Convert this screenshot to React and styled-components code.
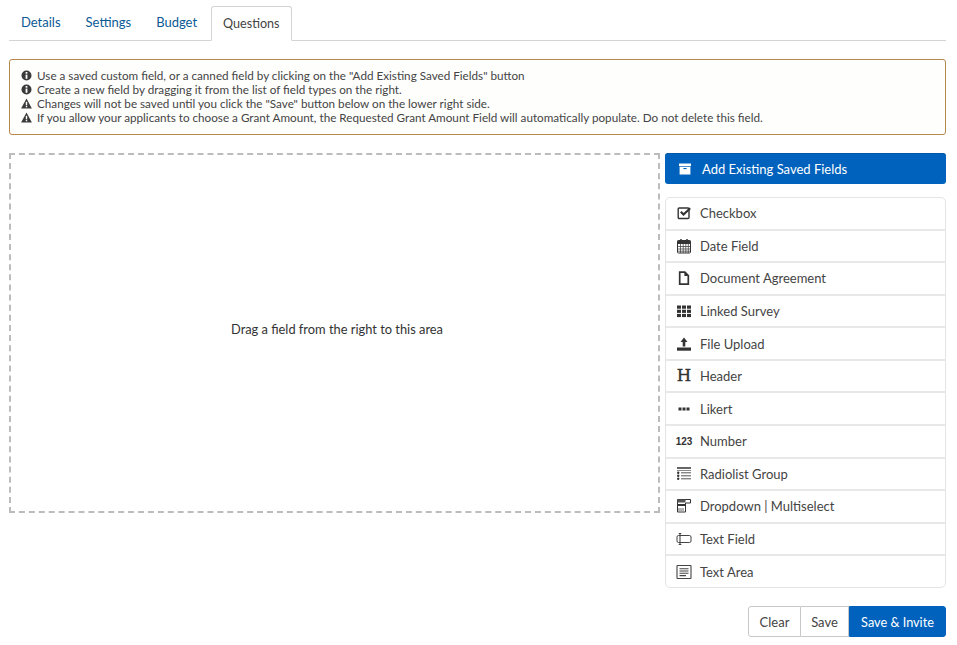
import React from "react";
import styled, { createGlobalStyle } from "styled-components";

const Global = createGlobalStyle`
  html, body { margin: 0; padding: 0; background: #fff; }
  body { font-family: "Lato", "Open Sans", sans-serif; font-size: 13px; color: #333; }
  * { box-sizing: border-box; }
`;

const Page = styled.div`
  width: 957px;
  height: 645px;
  padding: 6px 11px 0 9px;
  overflow: hidden;
`;
const TabBar = styled.div`
  display: flex;
  height: 35px;
  border-bottom: 1px solid #d4d4d4;
`;
const Tab = styled.div`
  height: ${p => (p.$active ? "35px" : "34px")};
  padding: ${p => (p.$active ? "0 11px 1px" : "0 11px 2px")};
  margin: ${p => (p.$active ? "0 0 0 1px" : "0 1px 0 0")};
  display: flex;
  align-items: center;
  font-size: ${p => (p.$active ? "12.6px" : "13px")};
  color: ${p => (p.$active ? "#444" : "#0b5a96")};
  background: #fff;
  border: 1px solid ${p => (p.$active ? "#d4d4d4" : "transparent")};
  border-bottom-color: ${p => (p.$active ? "#fff" : "transparent")};
  border-radius: 3px 3px 0 0;
`;
const Alert = styled.div`
  margin-top: 18px;
  height: 76px;
  padding: 8px 11px;
  border: 1px solid #b5884e;
  border-radius: 3px;
  background: #fefefd;
`;
const AlertLine = styled.div`
  display: flex;
  align-items: center;
  gap: 5px;
  height: 14px;
  font-size: 11.7px;
  color: #444;
  white-space: nowrap;
`;
const Main = styled.div`
  display: flex;
  margin-top: 18px;
  gap: 5px;
`;
const DropZone = styled.div`
  width: 651px;
  height: 360px;
  padding: 0 0 8px 5px;
  border: 2px dashed #bcbcbc;
  display: flex;
  align-items: center;
  justify-content: center;
  font-size: 12.85px;
  color: #333;
`;
const Side = styled.div`
  width: 281px;
  display: flex;
  flex-direction: column;
`;
const AddButton = styled.div`
  height: 31px;
  background: #0062bd;
  border-top: 1px solid #0056a8;
  border-radius: 3px;
  color: #fff;
  display: flex;
  align-items: center;
  padding-left: 14px;
  gap: 11px;
  font-size: 13px;
`;
const List = styled.div`
  margin-top: 13px;
  height: 391px;
  border: 1px solid #e4e4e4;
  border-radius: 5px;
  display: flex;
  flex-direction: column;
`;
const Row = styled.div`
  flex: 1;
  display: flex;
  align-items: center;
  padding-left: 10px;
  font-size: 13px;
  color: #444;
  border-top: ${p => (p.$first ? "none" : "2px solid #e8e8e8")};
`;
const IconBox = styled.span`
  width: 16px;
  height: 16px;
  margin-right: 8px;
  display: flex;
  align-items: center;
  justify-content: center;
  flex: none;
`;
const Footer = styled.div`
  display: flex;
  justify-content: flex-end;
  margin-top: 18px;
`;
const Btn = styled.div`
  height: 31px;
  width: ${p => p.$w}px;
  display: flex;
  align-items: center;
  justify-content: center;
  font-size: ${p => (p.$primary ? "12.7px" : "13px")};
  color: ${p => (p.$primary ? "#fff" : "#444")};
  background: ${p => (p.$primary ? "#0062bd" : "#fff")};
  border: 1px solid ${p => (p.$primary ? "#0062bd" : "#c8c8c8")};
  border-left-width: ${p => (p.$first || p.$primary ? "1px" : "0")};
  border-radius: ${p => (p.$first ? "3px 0 0 3px" : p.$primary ? "0 3px 3px 0" : "0")};
`;

const C = "#333";
const Svg = ({ children, w = 16, h = 16 }) => (
  <svg width={w} height={h} viewBox={`0 0 ${w} ${h}`} style={{ display: "block" }}>{children}</svg>
);

const InfoIcon = () => (
  <svg width="11" height="11" viewBox="0 0 11 11" style={{ flex: "none" }}>
    <circle cx="5.5" cy="5.5" r="5" fill="#3a3a3a" />
    <rect x="4.6" y="2" width="1.8" height="1.7" fill="#fff" />
    <rect x="4.6" y="4.6" width="1.8" height="4.2" fill="#fff" />
  </svg>
);
const WarnIcon = () => (
  <svg width="11" height="11" viewBox="0 0 11 11" style={{ flex: "none" }}>
    <path d="M5.5.6 10.9 10.4H.1Z" fill="#3a3a3a" />
    <rect x="4.8" y="3.8" width="1.4" height="3.6" fill="#fff" />
    <rect x="4.8" y="8" width="1.4" height="1.3" fill="#fff" />
  </svg>
);
const ArchiveIcon = () => (
  <svg width="12" height="12" viewBox="0 0 12 12">
    <rect x="0" y="0.5" width="12" height="2.6" fill="#fff" />
    <rect x="0.6" y="3.8" width="10.8" height="7.7" fill="#fff" />
    <rect x="4.4" y="5" width="3.2" height="1.1" fill="#0062bd" />
  </svg>
);

const icons = {
  check: (
    <Svg>
      <rect x="2.2" y="3" width="10.8" height="10.5" rx="1" fill="none" stroke={C} strokeWidth="1.4" />
      <path d="M4.8 6.8 7.5 9.6 14.2 3.2" fill="none" stroke={C} strokeWidth="2.1" />
    </Svg>
  ),
  date: (
    <Svg>
      <rect x="1.5" y="2.5" width="13" height="12.5" rx="1" fill="none" stroke={C} strokeWidth="1" />
      <rect x="1.5" y="2.5" width="13" height="3.5" fill={C} />
      <rect x="4" y="1" width="2" height="3.6" rx="1" fill={C} />
      <rect x="10" y="1" width="2" height="3.6" rx="1" fill={C} />
      <path d="M1.5 8.5h13M1.5 11h13M1.5 13.2h13M4.5 6v9M7.2 6v9M9.8 6v9M12.3 6v9" stroke={C} strokeWidth=".7" />
    </Svg>
  ),
  doc: (
    <Svg>
      <path d="M3.7 2.2h5.2l3.4 3.4v8.6H3.7Z" fill="none" stroke={C} strokeWidth="1.7" />
      <path d="M8.4 2v4h4.2Z" fill={C} />
    </Svg>
  ),
  grid: (
    <Svg>
      {[2.5, 6.7, 10.9].map(y => [1, 6, 11].map(x => <rect key={`${x}${y}`} x={x} y={y} width="4" height="3.2" fill={C} />))}
    </Svg>
  ),
  upload: (
    <Svg>
      <path d="M8 1.5 11.5 6H9.3v4.5H6.7V6H4.5Z" fill={C} />
      <rect x="1" y="11.5" width="14" height="3.2" fill={C} />
    </Svg>
  ),
  likert: (
    <Svg>
      {[2.5, 6.5, 10.5].map(x => <rect key={x} x={x} y="6.5" width="3" height="3" fill={C} />)}
    </Svg>
  ),
  radio: (
    <Svg>
      <rect x="1" y="1" width="14" height="2" fill="#666" />
      <rect x="1" y="4" width="14" height="1" fill="#888" />
      {[6.8, 9.8, 12.8].map(y => <circle key={y} cx="2.2" cy={y} r="1.2" fill={C} />)}
      {[6.3, 9.3, 12.3].map(y => <rect key={y} x="5" y={y} width="10" height="1" fill="#555" />)}
    </Svg>
  ),
  dropdown: (
    <Svg>
      <path d="M1.5 1.5h13v3.5h-5v9h-8Z" fill="none" stroke={C} strokeWidth="1" />
      <rect x="1.5" y="1.5" width="8" height="3" fill="#555" />
      <rect x="1.5" y="6" width="8" height="2" fill={C} />
      <path d="M3 10v3M5 10v3M7 10v3" stroke="#666" strokeWidth="1" />
    </Svg>
  ),
  textfield: (
    <Svg>
      <rect x="1" y="4.5" width="14" height="7" rx="1.5" fill="none" stroke="#444" strokeWidth="1" />
      <path d="M4 2.5v11M2.7 2.5h2.6M2.7 13.5h2.6" fill="none" stroke="#444" strokeWidth="1.1" />
    </Svg>
  ),
  textarea: (
    <Svg>
      <rect x="1" y="1.5" width="14" height="13" rx=".5" fill="none" stroke="#444" strokeWidth="1.1" />
      <path d="M3.5 4.7h9M3.5 7h9M3.5 9.3h9M3.5 11.6h6.5" stroke="#444" strokeWidth="1.1" />
    </Svg>
  ),
};

const HGlyph = styled.span`
  font-family: "DejaVu Serif", serif;
  font-weight: 400;
  font-size: 16.5px;
  line-height: 16px;
  color: #333;
  -webkit-text-stroke: 0.4px #333;
`;
const NumGlyph = styled.span`
  font-family: "Liberation Sans", sans-serif;
  font-weight: 700;
  font-size: 10px;
  color: #333;
  white-space: nowrap;
`;

const rows = [
  ["Checkbox", icons.check],
  ["Date Field", icons.date],
  ["Document Agreement", icons.doc],
  ["Linked Survey", icons.grid],
  ["File Upload", icons.upload],
  ["Header", <HGlyph>H</HGlyph>],
  ["Likert", icons.likert],
  ["Number", <NumGlyph>123</NumGlyph>],
  ["Radiolist Group", icons.radio],
  ["Dropdown | Multiselect", icons.dropdown],
  ["Text Field", icons.textfield],
  ["Text Area", icons.textarea],
];

const notes = [
  [InfoIcon, 'Use a saved custom field, or a canned field by clicking on the "Add Existing Saved Fields" button'],
  [InfoIcon, "Create a new field by dragging it from the list of field types on the right."],
  [WarnIcon, 'Changes will not be saved until you click the "Save" button below on the lower right side.'],
  [WarnIcon, "If you allow your applicants to choose a Grant Amount, the Requested Grant Amount Field will automatically populate. Do not delete this field."],
];

export default function App() {
  return (
    <>
      <Global />
      <Page>
        <TabBar>
          <Tab>Details</Tab>
          <Tab>Settings</Tab>
          <Tab>Budget</Tab>
          <Tab $active>Questions</Tab>
        </TabBar>
        <Alert>
          {notes.map(([I, t]) => (
            <AlertLine key={t}><I />{t}</AlertLine>
          ))}
        </Alert>
        <Main>
          <DropZone>Drag a field from the right to this area</DropZone>
          <Side>
            <AddButton><ArchiveIcon />Add Existing Saved Fields</AddButton>
            <List>
              {rows.map(([t, ic], i) => (
                <Row key={t} $first={i === 0}><IconBox>{ic}</IconBox>{t}</Row>
              ))}
            </List>
            <Footer>
              <Btn $first $w={53}>Clear</Btn>
              <Btn $w={48}>Save</Btn>
              <Btn $primary $w={97}>Save &amp; Invite</Btn>
            </Footer>
          </Side>
        </Main>
      </Page>
    </>
  );
}
